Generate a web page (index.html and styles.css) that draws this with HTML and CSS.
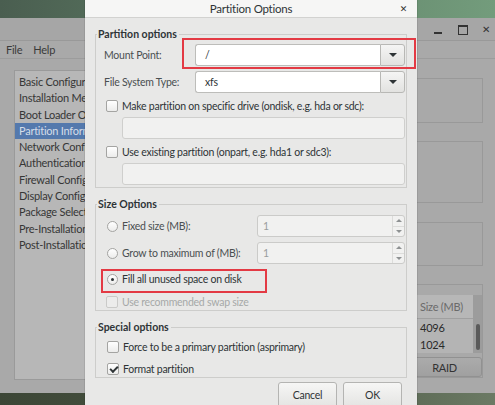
FILE: index.html
```html
<!DOCTYPE html>
<html>
<head>
<meta charset="utf-8">
<link rel="stylesheet" href="styles.css">
</head>
<body>
<div class="desktop">
  <div class="top-strip"></div>
  <div class="win">
    <div class="win-title">
      <span class="ctl ctl-min"></span>
      <span class="ctl ctl-max"></span>
      <span class="ctl ctl-close">&#x2715;</span>
    </div>
    <div class="menubar"><span>File</span><span>Help</span></div>
    <div class="win-body">
      <ul class="nav">
        <li>Basic Configuration</li>
        <li>Installation Method</li>
        <li>Boot Loader Options</li>
        <li class="sel">Partition Information</li>
        <li>Network Configuration</li>
        <li>Authentication</li>
        <li>Firewall Configuration</li>
        <li>Display Configuration</li>
        <li>Package Selection</li>
        <li>Pre-Installation Script</li>
        <li>Post-Installation Script</li>
      </ul>
      <div class="right">
        <div class="box b1"></div>
        <div class="box b2"></div>
        <div class="box b3"></div>
        <div class="box bframe">
          <div class="tree">
            <div class="tree-main">
              <div class="trow th"><span class="c1"></span><span class="c2">Size (MB)</span></div>
              <div class="trow"><span class="c1"></span><span class="c2">4096</span></div>
              <div class="trow"><span class="c1"></span><span class="c2">1024</span></div>
            </div>
            <div class="sb"><div class="thumb"></div></div>
          </div>
          <div class="raid">RAID</div>
        </div>
      </div>
    </div>
  </div>
  <div class="bottom-strip"></div>
</div>

<div class="dialog">
  <div class="d-title">Partition Options<span class="d-close">&#x2715;</span></div>
  <div class="d-body">
    <fieldset class="frame f1">
      <legend>Partition options</legend>
      <div class="row r-mount">
        <span class="lbl">Mount Point:</span>
        <div class="combo"><span class="entry">/</span><span class="dd"><i class="arrow"></i></span></div>
      </div>
      <div class="row r-fs">
        <span class="lbl">File System Type:</span>
        <div class="combo"><span class="entry">xfs</span><span class="dd"><i class="arrow"></i></span></div>
      </div>
      <div class="chk-row r-ondisk"><span class="cb"></span><span>Make partition on specific drive (ondisk, e.g. hda or sdc):</span></div>
      <div class="ientry"></div>
      <div class="chk-row r-onpart"><span class="cb"></span><span>Use existing partition (onpart, e.g. hda1 or sdc3):</span></div>
      <div class="ientry"></div>
    </fieldset>

    <fieldset class="frame f2">
      <legend>Size Options</legend>
      <div class="row r-fixed">
        <span class="rb"></span><span class="rlbl">Fixed size (MB):</span>
        <div class="spin"><span class="sval">1</span><span class="sbtn"><i class="up"></i><i class="down"></i></span></div>
      </div>
      <div class="row r-grow">
        <span class="rb"></span><span class="rlbl">Grow to maximum of (MB):</span>
        <div class="spin"><span class="sval">1</span><span class="sbtn"><i class="up"></i><i class="down"></i></span></div>
      </div>
      <div class="chk-row r-fill"><span class="rb on"></span><span>Fill all unused space on disk</span></div>
      <div class="chk-row r-swap dis"><span class="cb"></span><span>Use recommended swap size</span></div>
    </fieldset>

    <fieldset class="frame f3">
      <legend>Special options</legend>
      <div class="chk-row r-force"><span class="cb"></span><span>Force to be a primary partition (asprimary)</span></div>
      <div class="chk-row r-format"><span class="cb checked"></span><span>Format partition</span></div>
    </fieldset>

    <div class="buttons">
      <span class="btn">Cancel</span>
      <span class="btn">OK</span>
    </div>
  </div>
  <div class="hl hl1"></div>
  <div class="hl hl2"></div>
</div>
</body>
</html>
```

FILE: styles.css
```css
* { box-sizing: border-box; }
html, body { margin: 0; padding: 0; }
body {
  width: 495px;
  height: 405px;
  overflow: hidden;
  position: relative;
  font-family: "Lato", "Open Sans", "DejaVu Sans", sans-serif;
  font-size: 10.5px;
  letter-spacing: -0.25px;
  color: #2e3436;
}

/* ---------- desktop / background window ---------- */
.desktop {
  height: 405px;
  display: flex;
  flex-direction: column;
  background: #4e5f4d;
}
.top-strip {
  height: 18px;
  background: linear-gradient(90deg, #4a5e50 0%, #5f7f66 50%, #739c7c 100%);
}
.bottom-strip {
  flex: 1;
  background: linear-gradient(90deg, #3c4636 0%, #4d5a46 60%, #6b7a64 100%);
}
.win {
  height: 375px;
  background: #a9a9a9;
  border-radius: 4px 4px 0 0;
  display: flex;
  flex-direction: column;
  color: #3a3a3a;
}
.win-title {
  height: 23px;
  border-bottom: 1px solid #999;
  background: #a6a6a6;
  display: flex;
  justify-content: flex-end;
  align-items: center;
  padding-right: 4px;
  gap: 14px;
}
.ctl { width: 10px; height: 10px; position: relative; font-size: 10px; line-height: 10px; color: #333; text-align: center; font-weight: bold; }
.ctl-min::after { content: ""; position: absolute; left: 1px; right: 1px; bottom: 0; height: 2px; background: #333; }
.ctl-max::after { content: ""; position: absolute; left: 1px; top: 1px; width: 8px; height: 7px; border: 1px solid #333; border-top-width: 2px; }
.menubar {
  height: 18px;
  border-bottom: 1px solid #9c9c9c;
  display: flex;
  align-items: center;
  gap: 11px;
  padding-left: 6px;
  font-size: 11px;
}
.win-body {
  flex: 1;
  display: flex;
  padding: 11px 12px 13px 14px;
  gap: 12px;
}
.nav {
  list-style: none;
  margin: 0;
  padding: 3px 0 0 0;
  width: 200px;
  background: #b7b7b7;
  border: 1px solid #9a9a9a;
  font-size: 11px;
  color: #363636;
}
.nav li { width: 71px; height: 16.3px; line-height: 16.3px; padding-left: 4px; white-space: nowrap; overflow: hidden; }
.nav li.sel { background: #5479ad; color: #d5dde8; }
.right {
  flex: 1;
  display: flex;
  flex-direction: column;
  padding-top: 8px;
}
.box { border: 1px solid #999; }
.b1 { height: 45px; }
.b2 { height: 62px; margin-top: 18px; }
.b3 { height: 44px; margin-top: 19px; }
.bframe { height: 94px; margin-top: 18px; padding: 10px 0 0 0; display: flex; flex-direction: column; border-right: 1px solid #999; }
.tree { display: flex; height: 58px; background: #b4b4b4; }
.tree-main { flex: 1; }
.trow { display: flex; height: 17px; line-height: 17px; font-size: 11px; color: #2a2a2a; }
.trow.th { height: 24px; line-height: 24px; color: #6a6a6a; border-bottom: 1px solid #a0a0a0; background: #b7b7b7; }
.c1 { flex: 1; }
.c2 { width: 57px; padding-left: 4px; }
.sb { width: 9px; background: #9c9c9c; position: relative; }
.thumb { position: absolute; left: 3px; width: 4px; top: 29px; height: 26px; background: #5a5a5a; border-radius: 2px; }
.raid {
  margin-top: 4px;
  height: 22px;
  border: 1px solid #919191;
  border-radius: 3px;
  background: linear-gradient(#ababab, #a0a0a0);
  display: flex;
  align-items: center;
  justify-content: flex-end;
  padding-right: 24px;
  font-size: 11px;
  color: #333;
}

/* ---------- dialog ---------- */
.dialog {
  position: absolute;
  left: 85px;
  top: 0;
  width: 332px;
  height: 420px;
  background: #e8e8e7;
  box-shadow: 0 0 0 1px rgba(0,0,0,0.08);
}
.d-title {
  height: 18px;
  background: #f6f6f5;
  border-bottom: 1px solid #d2d2d0;
  display: flex;
  align-items: center;
  justify-content: center;
  font-size: 11.5px;
  color: #2e3436;
  position: relative;
}
.d-close { position: absolute; right: 10px; top: 3px; font-size: 9px; font-weight: bold; color: #333; }
.d-body { padding: 9px 10px 0 10px; }

.frame {
  margin: 0;
  padding: 0 1px 0 8px;
  border: 1px solid #cdcdcb;
  min-width: 0;
}
.frame legend {
  padding: 0 2px 0 1px;
  margin-left: -7px;
  font-weight: bold;
  font-size: 10.5px;
  letter-spacing: 0;
  line-height: 14px;
  height: 14px;
  color: #2e3436;
}
.f2, .f3 { margin-top: 9px; }

.row { display: flex; align-items: center; height: 22px; }
.lbl { width: 91px; white-space: nowrap; color: #4a4f51; }
.r-mount { margin-top: 3px; }
.r-fs { margin-top: 5px; }
.combo { flex: 1; display: flex; height: 22px; }
.entry {
  flex: 1;
  background: #fff;
  border: 1px solid #bdbdba;
  border-right: none;
  border-radius: 3px 0 0 3px;
  padding-left: 9px;
  line-height: 20px;
  color: #2e3436;
}
.dd {
  width: 25px;
  border: 1px solid #b8b8b5;
  border-radius: 0 3px 3px 0;
  background: linear-gradient(#f5f5f4, #e2e2e0);
  display: flex;
  align-items: center;
  justify-content: center;
}
.arrow {
  width: 0; height: 0;
  border-left: 4px solid transparent;
  border-right: 4px solid transparent;
  border-top: 4px solid #2e3436;
}

.chk-row { display: flex; align-items: center; height: 14px; padding-left: 2px; white-space: nowrap; color: #2e3436; }
.cb {
  width: 12px; height: 12px;
  border: 1px solid #a4a4a2;
  border-radius: 2px;
  background: linear-gradient(#ffffff, #ececeb);
  margin-right: 4px;
  position: relative;
  flex: none;
}
.cb.checked::after {
  content: "";
  position: absolute;
  left: 2px;
  width: 6px; height: 3px;
  border-left: 2px solid #2e3436;
  border-bottom: 2px solid #2e3436;
  transform: rotate(-45deg);
  transform-origin: center;
  top: 2px;
}
.rb {
  width: 11px; height: 11px;
  border: 1px solid #a4a4a2;
  border-radius: 50%;
  background: linear-gradient(#ffffff, #ececeb);
  margin-right: 4px;
  position: relative;
  flex: none;
}
.rb.on::after {
  content: "";
  position: absolute;
  left: 3px; top: 3px;
  width: 3px; height: 3px;
  border-radius: 50%;
  background: #2e3436;
}
.r-ondisk { margin-top: 6px; }
.r-onpart { margin-top: 6px; }
.ientry {
  margin-left: 18px;
  margin-top: 4px;
  height: 22px;
  background: #f1f1f0;
  border: 1px solid #cfcfcd;
  border-radius: 3px;
}
.f1 { padding-bottom: 2px; }

.r-fixed, .r-grow { padding-left: 3px; }
.r-fixed { margin-top: 4px; }
.r-grow { margin-top: 5px; }
.rlbl { width: 135px; white-space: nowrap; color: #4a4f51; }
.spin {
  flex: 1;
  height: 22px;
  display: flex;
  background: #f1f1f0;
  border: 1px solid #cbcbc9;
  border-radius: 3px;
}
.sval { flex: 1; padding-left: 5px; line-height: 20px; color: #9a9d9e; }
.sbtn { width: 12px; display: flex; flex-direction: column; border-left: 1px solid #dcdcda; }
.sbtn i { flex: 1; display: flex; align-items: center; justify-content: center; }
.sbtn .up { border-bottom: 1px solid #dcdcda; }
.sbtn .up::after { content: ""; border-left: 3px solid transparent; border-right: 3px solid transparent; border-bottom: 3px solid #8e9192; }
.sbtn .down::after { content: ""; border-left: 3px solid transparent; border-right: 3px solid transparent; border-top: 3px solid #8e9192; }
.r-fill { margin-top: 8px; padding-left: 3px; }
.r-swap { margin-top: 9px; padding-left: 2px; }
.dis { color: #a6a8a8; }
.dis .cb { border-color: #cacac8; background: #ececeb; }
.f2 { padding-bottom: 1px; }

.r-force { margin-top: 6px; padding-left: 3px; }
.r-format { margin-top: 8px; padding-left: 3px; }
.f3 { padding-bottom: 1px; }

.buttons { display: flex; justify-content: flex-end; gap: 6px; margin-top: 4px; padding-right: 5px; }
.btn {
  width: 59px; height: 26px;
  border: 1px solid #b4b4b2;
  border-radius: 3px;
  background: linear-gradient(#f6f6f5, #e4e4e2);
  display: flex; align-items: center; justify-content: center;
  color: #2e3436;
  font-size: 10.5px;
}

.hl { position: absolute; border: 2px solid #e33a44; }
.hl1 { left: 97px; top: 38px; width: 234px; height: 31px; }
.hl2 { left: 16px; top: 269px; width: 166px; height: 24px; }
```
